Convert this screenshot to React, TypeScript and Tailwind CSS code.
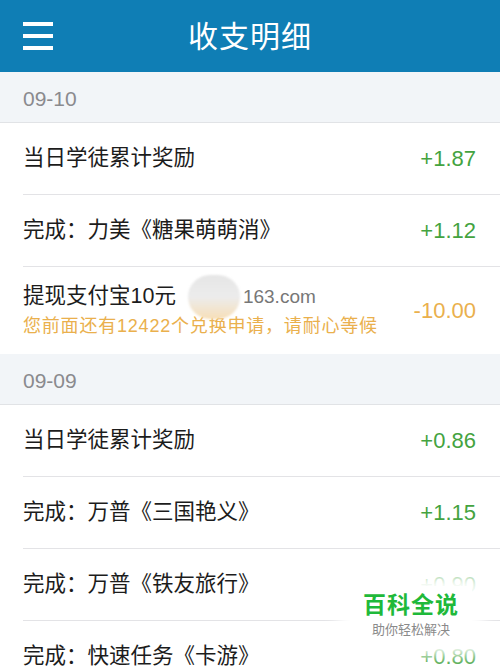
import React from "react";

type Item = { title: string; amount: string; note?: string; email?: boolean };
type Group = { date: string; items: Item[] };

const groups: Group[] = [
    {
        date: "09-10",
        items: [
            { title: "当日学徒累计奖励", amount: "+1.87" },
            { title: "完成：力美《糖果萌萌消》", amount: "+1.12" },
            { title: "提现支付宝10元", amount: "-10.00", email: true, note: "您前面还有12422个兑换申请，请耐心等候" },
        ],
    },
    {
        date: "09-09",
        items: [
            { title: "当日学徒累计奖励", amount: "+0.86" },
            { title: "完成：万普《三国艳义》", amount: "+1.15" },
            { title: "完成：万普《铁友旅行》", amount: "+0.90" },
            { title: "完成：快速任务《卡游》", amount: "+0.80" },
        ],
    },
];

const font = { fontFamily: '"Liberation Sans", "Noto Sans CJK SC", sans-serif' };

const Row: React.FC<{ item: Item; last: boolean }> = ({ item, last }) => {
    const minus = item.amount.startsWith("-");
    return (
        <div className="pl-[23px] bg-white">
            <div className={`flex items-center justify-between pr-[24px] ${item.note ? "h-[87px]" : "h-[72px]"} ${last ? "" : "border-b border-[#e3e3e6]"}`}>
                <div>
                    <div className="flex items-center text-[21.5px] text-[#1c1c1c] leading-none">
                        <span>{item.title}</span>
                        {item.email && (
                            <span className="flex items-center">
                                <span className="ml-[12px] -my-[12px] w-[52px] h-[44px] rounded-full bg-gradient-to-b from-[#e6e6e6] via-[#ececec] to-[#f7dfb8] blur-[1px]" />
                                <span className="ml-[3px] text-[19px] text-[#777]">163.com</span>
                            </span>
                        )}
                    </div>
                    {item.note && <div className="mt-[10px] text-[18px] tracking-[0.8px] leading-none text-[#eab04d]">{item.note}</div>}
                </div>
                <span className={`text-[22px] ${minus ? "text-[#eab04d]" : "text-[#44a33f]"}`}>{item.amount}</span>
            </div>
        </div>
    );
};

export default function App() {
    return (
        <div className="relative w-[500px] h-[666px] overflow-hidden bg-white" style={font}>
            <div className="h-[72px] bg-[#0f7eb5] flex items-center relative">
                <div className="ml-[23px] flex flex-col gap-[8px] w-[30px]">
                    <span className="h-[4px] bg-white" />
                    <span className="h-[4px] bg-white" />
                    <span className="h-[4px] bg-white" />
                </div>
                <div className="absolute inset-0 flex items-center justify-center text-white text-[30px] tracking-[1px]">收支明细</div>
            </div>
            {groups.map((g) => (
                <div key={g.date}>
                    <div className="h-[51px] bg-[#f2f5f8] border-b border-[#e1e3e6] flex items-center pl-[23px] pt-[4px] text-[21px] text-[#8a8a8e]">
                        {g.date}
                    </div>
                    {g.items.map((it, i) => (
                        <Row key={it.title + i} item={it} last={i === g.items.length - 1 && g.date === "09-10"} />
                    ))}
                </div>
            ))}
            <div className="absolute left-[350px] top-[586px] w-[122px] h-[58px] flex flex-col items-center justify-center bg-white shadow-[0_0_14px_12px_rgba(255,255,255,1)]">
                <span className="text-[23px] font-bold text-[#1fb93a] leading-none tracking-[1px]">百科全说</span>
                <span className="mt-[6px] text-[13px] text-[#8a8a8a] leading-none">助你轻松解决</span>
            </div>
        </div>
    );
}
